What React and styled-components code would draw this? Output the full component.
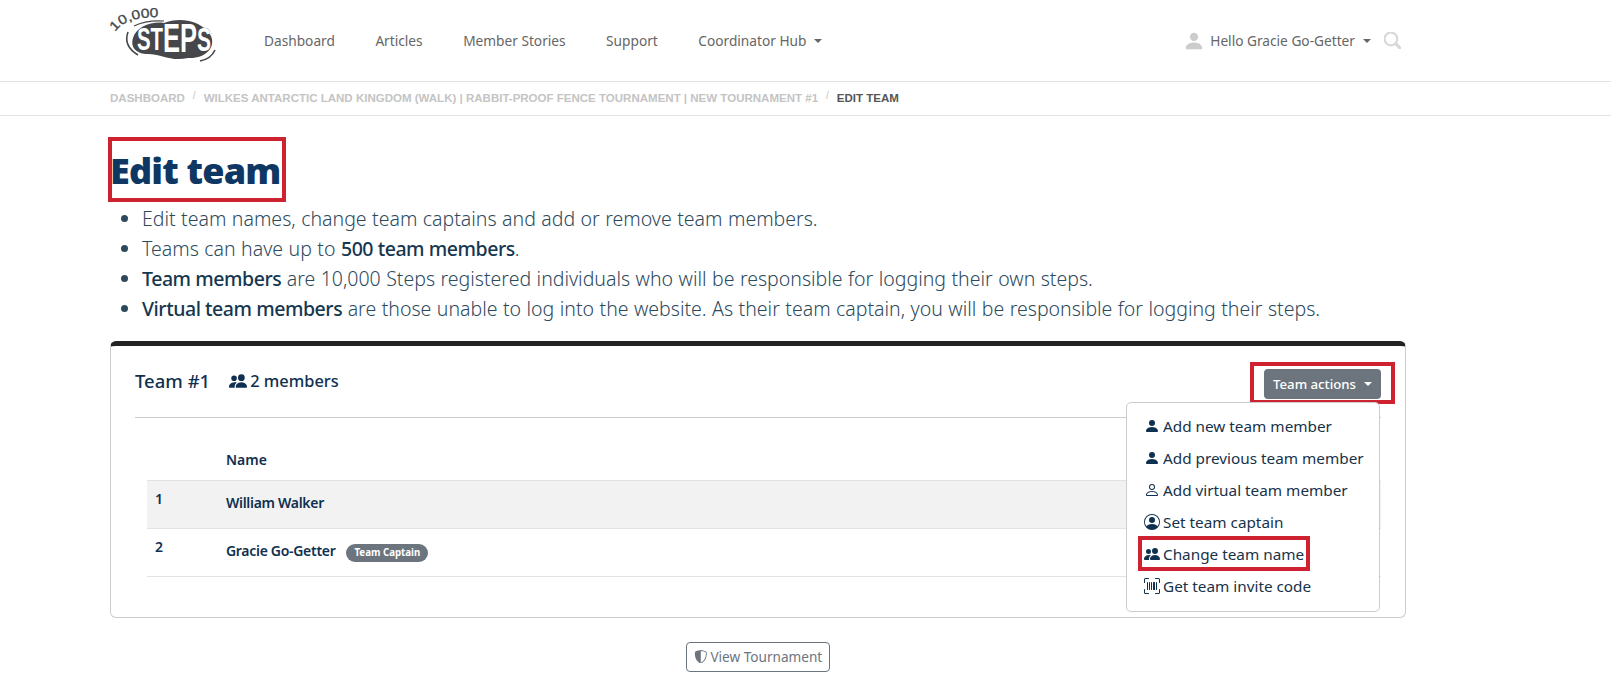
import React from 'react'
import styled, { createGlobalStyle } from 'styled-components'
import { BsPersonFill, BsPerson, BsPersonCircle, BsPeopleFill, BsUpcScan, BsShieldShaded, BsSearch } from 'react-icons/bs'

const GlobalStyle = createGlobalStyle`
    * { box-sizing: border-box; }
    body {
        margin: 0;
        background: #fff;
        color: #0f3050;
        font-family: 'Noto Sans', 'Open Sans', sans-serif;
    }
`

const navLinks = ['Dashboard', 'Articles', 'Member Stories', 'Support']

const menuItems = [
    { icon: <BsPersonFill />, label: 'Add new team member' },
    { icon: <BsPersonFill />, label: 'Add previous team member' },
    { icon: <BsPerson />, label: 'Add virtual team member' },
    { icon: <BsPersonCircle />, label: 'Set team captain' },
    { icon: <BsPeopleFill />, label: 'Change team name', marked: true },
    { icon: <BsUpcScan />, label: 'Get team invite code' },
]

const points = [
    <>Edit team names, change team captains and add or remove team members.</>,
    <>Teams can have up to <b>500 team members</b>.</>,
    <><b>Team members</b> are 10,000 Steps registered individuals who will be responsible for logging their own steps.</>,
    <><b>Virtual team members</b> are those unable to log into the website. As their team captain, you will be responsible for logging their steps.</>,
]

const logoDark = '#46474b'

function Logo() {
    return (
        <LogoSvg viewBox="0 0 110 60" aria-label="10,000 Steps">
            <path id="logoArc" d="M5 29 Q15 14 49 14" fill="none" />
            <path d="M23 35 C26 24 42 18 54 20 C70 13 93 18 101 33 C106 45 95 56 78 55 C62 59 50 51 38 51 C27 51 20 45 23 35 Z" fill={logoDark} />
            <path d="M24 23 Q36 17 54 18" fill="none" stroke={logoDark} strokeWidth="1.2" />
            <path d="M18 29 Q13 43 28 52" fill="none" stroke={logoDark} strokeWidth="1.6" />
            <path d="M105 47 Q101 56 90 58" fill="none" stroke={logoDark} strokeWidth="1.6" />
            <text fontFamily="'Liberation Sans Narrow','Liberation Sans',sans-serif" fontSize="13" fill={logoDark} stroke={logoDark} strokeWidth="0.3">
                <textPath href="#logoArc" textLength="48" lengthAdjust="spacingAndGlyphs">10,000</textPath>
            </text>
            <LogoWord x="27" y="47" textLength="74" lengthAdjust="spacingAndGlyphs">
                <tspan fontSize="32">ST</tspan><tspan fontSize="40" dy="2">EP</tspan><tspan fontSize="33" dy="-1">S</tspan>
            </LogoWord>
        </LogoSvg>
    )
}

export default function App() {
    return (
        <>
            <GlobalStyle />
            <Header>
                <Logo />
                <Nav>
                    {navLinks.map(link => <NavLink key={link}>{link}</NavLink>)}
                    <NavLink>Coordinator Hub<Caret /></NavLink>
                </Nav>
                <UserArea>
                    <UserIcon><BsPersonFill /></UserIcon>
                    <NavLink>Hello Gracie Go-Getter<Caret /></NavLink>
                    <SearchIcon><BsSearch /></SearchIcon>
                </UserArea>
            </Header>
            <Breadcrumb>
                <Crumb>Dashboard</Crumb>
                <Slash>/</Slash>
                <Crumb>Wilkes Antarctic Land Kingdom (Walk) | Rabbit-Proof Fence Tournament | New Tournament #1</Crumb>
                <Slash>/</Slash>
                <Crumb $current>Edit team</Crumb>
            </Breadcrumb>
            <Main>
                <TitleBox><Title>Edit team</Title></TitleBox>
                <Points>
                    {points.map((point, i) => <li key={i}>{point}</li>)}
                </Points>
                <Card>
                    <CardHead>
                        <TeamName>Team #1</TeamName>
                        <MemberCount><BsPeopleFill />2 members</MemberCount>
                        <Actions>
                            <ActionsBox>
                                <ActionsButton>Team actions<Caret /></ActionsButton>
                            </ActionsBox>
                            <Menu>
                                {menuItems.map(item => (
                                    <MenuItem key={item.label}>
                                        <MenuIcon>{item.icon}</MenuIcon>
                                        <MenuLabel $marked={item.marked}>{item.label}</MenuLabel>
                                    </MenuItem>
                                ))}
                            </Menu>
                        </Actions>
                    </CardHead>
                    <Divider />
                    <Table>
                        <HeadRow><span />Name</HeadRow>
                        <Row $shaded>
                            <RowNumber>1</RowNumber>
                            <RowName>William Walker</RowName>
                        </Row>
                        <Row>
                            <RowNumber>2</RowNumber>
                            <RowName>Gracie Go-Getter<Badge>Team Captain</Badge></RowName>
                        </Row>
                    </Table>
                </Card>
                <Footer>
                    <OutlineButton><BsShieldShaded />View Tournament</OutlineButton>
                </Footer>
            </Main>
        </>
    )
}

const Header = styled.header`
    height: 82px;
    padding: 0 210px 0 110px;
    display: flex;
    align-items: center;
    border-bottom: 1px solid #e2e2e2;
`
const LogoSvg = styled.svg`
    width: 110px;
    height: 60px;
    flex: none;
    margin: -16px 44px 0 0;
`
const LogoWord = styled.text`
    font-family: 'Liberation Sans Narrow', 'Liberation Sans', sans-serif;
    font-weight: 700;
    fill: #fff;
    stroke: ${logoDark};
    stroke-width: 0.6px;
    paint-order: stroke;
`
const Nav = styled.nav`
    display: flex;
    gap: 40.5px;
`
const NavLink = styled.a`
    font-size: 13.7px;
    color: #666;
    display: inline-flex;
    align-items: center;
    white-space: nowrap;
`
const Caret = styled.i`
    display: inline-block;
    margin-left: 8px;
    border-top: 4px solid currentColor;
    border-left: 4px solid transparent;
    border-right: 4px solid transparent;
`
const UserArea = styled.div`
    margin-left: auto;
    display: flex;
    align-items: center;
`
const UserIcon = styled.span`
    color: #ccc;
    font-size: 22px;
    display: flex;
    margin-right: 5px;
`
const SearchIcon = styled.span`
    color: #d8d8d8;
    font-size: 17px;
    display: flex;
    margin-left: 13px;
    svg { stroke-width: 1px; }
`
const Breadcrumb = styled.div`
    height: 34px;
    padding: 0 0 2px 110px;
    display: flex;
    align-items: center;
    border-bottom: 1px solid #e2e2e2;
    font-family: 'Liberation Sans', Arial, sans-serif;
    font-size: 11.52px;
    font-weight: 700;
    text-transform: uppercase;
`
const Crumb = styled.span`
    color: ${props => props.$current ? '#555' : '#c4c4c4'};
`
const Slash = styled.span`
    color: #c4c4c4;
    font-weight: 400;
    font-size: 10px;
    margin: -4px 8px 0;
`
const Main = styled.main`
    width: 1296px;
    margin-left: 110px;
`
const TitleBox = styled.div`
    display: inline-block;
    margin: 21px 0 0 -2px;
    padding: 0 1px 0 0;
    border: 4px solid #cf2230;
    height: 65px;
    vertical-align: top;
`
const Title = styled.h1`
    margin: 0 0 0 -2px;
    font-size: 36px;
    font-weight: 900;
    line-height: 60px;
    letter-spacing: -0.8px;
    color: #0e3763;
    white-space: nowrap;
`
const Points = styled.ul`
    margin: 2px 0 17px;
    padding-left: 32px;
    font-size: 19.5px;
    font-weight: 300;
    line-height: 30px;
    word-spacing: 0.4px;
    color: #2d4a5c;
    b { font-weight: 500; color: #15374f; letter-spacing: -0.45px; word-spacing: 0; }
`
const Card = styled.section`
    height: 277px;
    border: 1px solid #ccc;
    border-top: 5px solid #222;
    border-radius: 6px;
    padding: 0 24px;
`
const CardHead = styled.div`
    height: 71px;
    display: flex;
    align-items: center;
    padding-bottom: 2px;
`
const TeamName = styled.h2`
    margin: 0 19px 0 0;
    font-size: 18.5px;
    font-weight: 500;
    color: #0f3050;
`
const MemberCount = styled.div`
    display: flex;
    align-items: center;
    gap: 3px;
    font-size: 16.4px;
    font-weight: 500;
    svg { font-size: 18px; }
`
const Actions = styled.div`
    margin-left: auto;
    position: relative;
    align-self: flex-start;
    margin-top: 16px;
`
const ActionsBox = styled.div`
    border: 4px solid #cf2230;
    width: 145px;
    height: 42px;
    padding: 3px 10px 0 10px;
    margin-right: -14px;
`
const ActionsButton = styled.button`
    width: 117px;
    height: 30px;
    padding: 0 0 1px;
    border: 0;
    border-radius: 4px;
    background: #6c757d;
    color: #fff;
    font: 500 13.2px 'Noto Sans', sans-serif;
    display: flex;
    align-items: center;
    justify-content: center;
`
const Menu = styled.div`
    position: absolute;
    top: 40px;
    right: 1px;
    width: 254px;
    height: 210px;
    padding: 7px 0;
    background: #fff;
    border: 1px solid #ccc;
    border-radius: 5px;
    z-index: 2;
`
const MenuItem = styled.div`
    height: 32px;
    padding-left: 17px;
    display: flex;
    align-items: center;
    color: #17324a;
    font-size: 15.3px;
    white-space: nowrap;
`
const MenuIcon = styled.span`
    width: 16px;
    margin-right: 3px;
    display: flex;
    justify-content: center;
    color: #0f3050;
    font-size: 16px;
`
const MenuLabel = styled.span`
    position: relative;
    &::after {
        content: ${props => props.$marked ? "''" : 'none'};
        position: absolute;
        inset: -8px -6px -7px -25px;
        border: 4px solid #cf2230;
    }
`
const Divider = styled.hr`
    margin: 0;
    border: 0;
    border-top: 1px solid #ccc;
`
const Table = styled.div`
    margin: 22px 0 0 12px;
    font-size: 14px;
    font-weight: 600;
`
const HeadRow = styled.div`
    height: 41px;
    display: grid;
    grid-template-columns: 79px 1fr;
    padding-top: 10px;
    border-bottom: 1px solid #e2e2e2;
`
const Row = styled.div`
    height: 48px;
    display: grid;
    grid-template-columns: 79px 1fr;
    padding-top: 12px;
    border-bottom: 1px solid #e2e2e2;
    background: ${props => props.$shaded ? '#f2f2f2' : '#fff'};
`
const RowNumber = styled.span`
    padding-left: 8px;
    margin-top: -4px;
`
const RowName = styled.span`
    display: flex;
    align-items: flex-start;
    letter-spacing: -0.3px;
`
const Badge = styled.span`
    margin: 3px 0 0 11px;
    height: 18px;
    padding: 0 8px;
    border-radius: 9px;
    background: #6c757d;
    color: #fff;
    font-size: 9.7px;
    font-weight: 700;
    line-height: 17px;
    letter-spacing: 0;
`
const Footer = styled.div`
    margin-top: 24px;
    display: flex;
    justify-content: center;
`
const OutlineButton = styled.button`
    width: 144px;
    height: 30px;
    padding: 0 0 1px;
    border: 1px solid #6c757d;
    border-radius: 4px;
    background: #fff;
    color: #6c757d;
    font: 400 13.6px 'Noto Sans', sans-serif;
    white-space: nowrap;
    display: flex;
    align-items: center;
    justify-content: center;
    gap: 3px;
`
